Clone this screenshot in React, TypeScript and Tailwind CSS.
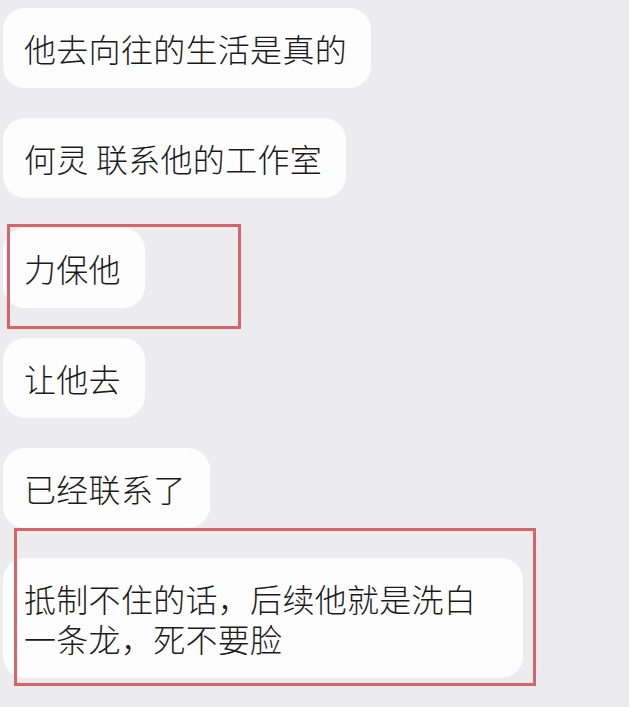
const messages = [
  "他去向往的生活是真的",
  "何灵 联系他的工作室",
  "力保他",
  "让他去",
  "已经联系了",
  "抵制不住的话，后续他就是洗白一条龙，死不要脸",
];

function Bubble({ text }: { text: string }) {
  return (
    <div className="w-fit max-w-[520px] rounded-[22px] bg-[#fdfdfd] py-[20px] pl-[21px] pr-[24px] text-[32px] font-light leading-[40px] tracking-[0.3px] text-[#1b1b1b]">
      {text}
    </div>
  );
}

export default function App() {
  return (
    <div
      className="relative h-[707px] w-[629px] overflow-hidden bg-[#ececef]"
      style={{ fontFamily: '"Noto Sans CJK SC", "Noto Sans", sans-serif' }}
    >
      <div className="flex flex-col gap-[30px] pl-[3px] pt-[8px]">
        {messages.map((m) => (
          <Bubble key={m} text={m} />
        ))}
      </div>

      {/* red annotation boxes */}
      <div className="absolute left-[7px] top-[224px] h-[105px] w-[234px] border-[3px] border-[#d9636a]" />
      <div className="absolute left-[14px] top-[528px] h-[158px] w-[522px] border-[3px] border-[#d9636a]" />
    </div>
  );
}
